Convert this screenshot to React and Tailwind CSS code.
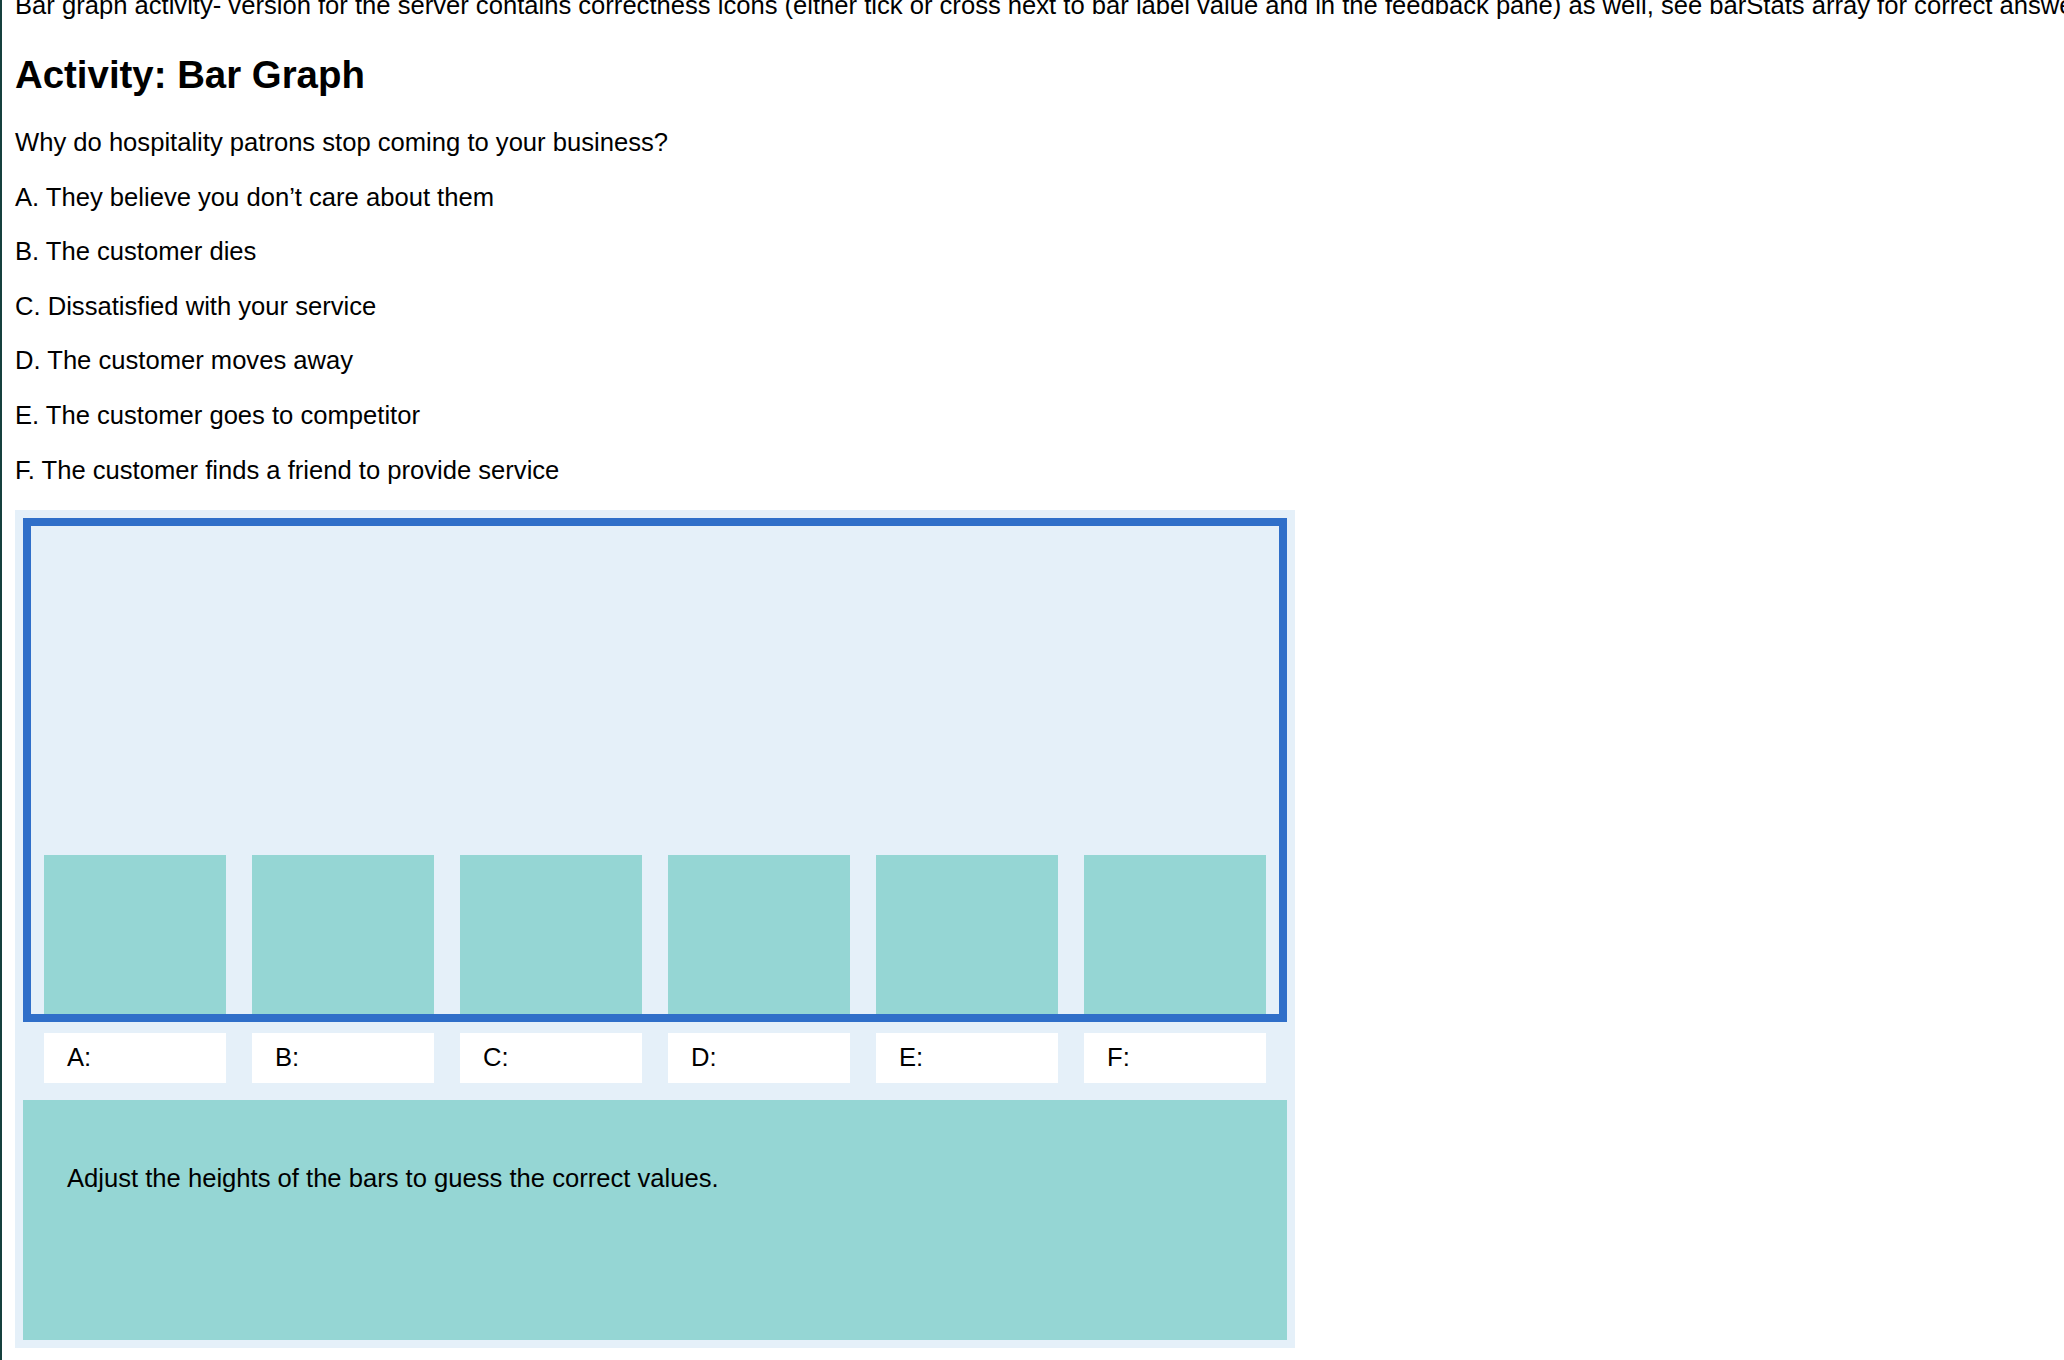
import React from "react";

const options = [
  "A. They believe you don’t care about them",
  "B. The customer dies",
  "C. Dissatisfied with your service",
  "D. The customer moves away",
  "E. The customer goes to competitor",
  "F. The customer finds a friend to provide service",
];

const bars = ["A", "B", "C", "D", "E", "F"];

export default function App() {
  return (
    <div className="h-[1360px] overflow-hidden bg-white border-l-2 border-[#15403d] pl-[13px] font-['Liberation_Sans',Arial,sans-serif] text-[25.6px] leading-[29px] text-black">
      {/* Intro note (scrolled partly out of view) */}
      <p className="mt-[-9px] whitespace-nowrap">
        Bar graph activity- version for the server contains correctness icons (either tick or cross next to bar label value and in the feedback pane) as well, see barStats array for correct answers
      </p>

      <h2 className="mt-[32px] text-[38.4px] leading-[45px] font-bold">Activity: Bar Graph</h2>

      <p className="mt-[31px]">Why do hospitality patrons stop coming to your business?</p>

      {options.map((opt) => (
        <p key={opt} className="mt-[25.6px]">
          {opt}
        </p>
      ))}

      {/* Activity panel */}
      <div className="mt-[25px] w-[1280px] bg-[#e5f0f9] p-[8px]">
        {/* Chart */}
        <div className="h-[504px] border-8 border-[#306fc9] flex items-end">
          {bars.map((b) => (
            <div key={b} className="w-[208px] flex justify-center">
              <div className="w-[182px] h-[159px] bg-[#95d6d4]" />
            </div>
          ))}
        </div>

        {/* Bar labels */}
        <div className="mt-[11px] pl-[8px] flex">
          {bars.map((b) => (
            <div key={b} className="w-[208px] flex justify-center">
              <div className="w-[182px] h-[50px] bg-white pl-[23px] flex items-center">{b}:</div>
            </div>
          ))}
        </div>

        {/* Feedback pane */}
        <div className="mt-[17px] h-[240px] bg-[#95d6d4] pl-[44px] pt-[64px]">
          Adjust the heights of the bars to guess the correct values.
        </div>
      </div>
    </div>
  );
}
